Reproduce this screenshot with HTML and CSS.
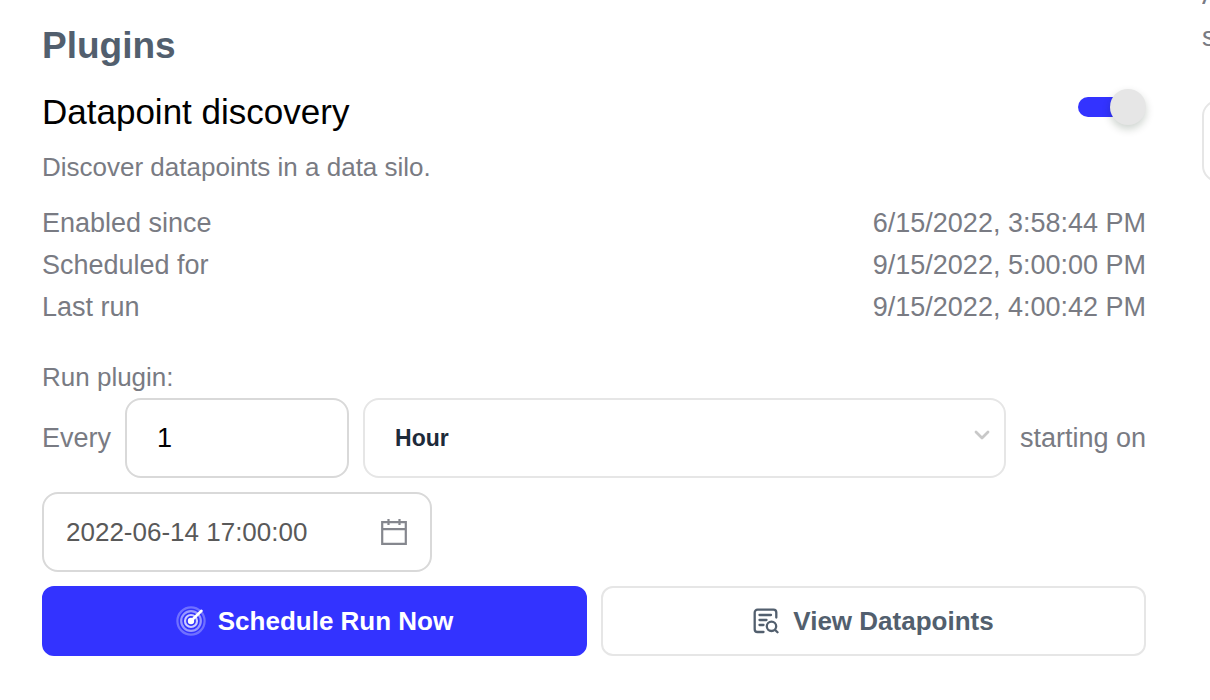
FILE: index.html
```html
<!DOCTYPE html>
<html lang="en">
<head>
<meta charset="utf-8">
<meta name="viewport" content="width=device-width, initial-scale=1">
<title>Plugins</title>
<link rel="stylesheet" href="styles.css">
</head>
<body>
<div class="page">
  <main class="panel">
    <h1 class="panel-title">Plugins</h1>
    <div class="plugin-head">
      <h2 class="plugin-name" id="plugin-name">Datapoint discovery</h2>
      <input class="switch" type="checkbox" role="switch" aria-labelledby="plugin-name" checked>
    </div>
    <p class="description">Discover datapoints in a data silo.</p>
    <dl class="facts">
      <div class="fact"><dt>Enabled since</dt><dd>6/15/2022, 3:58:44 PM</dd></div>
      <div class="fact"><dt>Scheduled for</dt><dd>9/15/2022, 5:00:00 PM</dd></div>
      <div class="fact"><dt>Last run</dt><dd>9/15/2022, 4:00:42 PM</dd></div>
    </dl>
    <form class="schedule">
      <p class="schedule-title">Run plugin:</p>
      <div class="controls">
        <label for="every">Every</label>
        <input class="field count" id="every" type="text" inputmode="numeric" value="1">
        <div class="select-wrap">
          <select class="field unit" aria-label="Interval unit">
            <option>Hour</option>
          </select>
          <svg class="chevron" viewBox="0 0 16 10" aria-hidden="true"><path d="M2 2l6 6 6-6" fill="none" stroke="currentColor" stroke-width="2.8" stroke-linecap="round" stroke-linejoin="round"/></svg>
        </div>
        <label for="start">starting on</label>
        <div class="date-wrap">
          <input class="field date" id="start" type="text" value="2022-06-14 17:00:00">
          <svg class="calendar" viewBox="0 0 28 28" aria-hidden="true"><path d="M2.2 4.2h23.600v21.600H2.200zM2.200 11.200h23.600M8.500 1v6M19.500 1v6" fill="none" stroke="currentColor" stroke-width="2.200"/></svg>
        </div>
      </div>
      <div class="actions">
        <button class="button primary" type="button">
          <svg class="icon target" viewBox="0 0 30 30" aria-hidden="true">
            <g fill="none" stroke="#fff" stroke-width="2.2">
              <circle cx="15" cy="15" r="13.6" opacity=".3"/>
              <circle cx="15" cy="15" r="9.8" opacity=".5"/>
              <circle cx="15" cy="15" r="6" opacity=".75"/>
            </g>
            <circle cx="15" cy="15" r="3.2" fill="#fff"/>
            <path d="M15 15L25.500 4.800" stroke="#fff" stroke-width="2.600" stroke-linecap="round"/>
          </svg>
          Schedule Run Now
        </button>
        <button class="button secondary" type="button">
          <svg class="icon list" viewBox="0 0 26 26" aria-hidden="true">
            <g fill="none" stroke="currentColor" stroke-width="2.300" stroke-linecap="round">
              <path d="M10.500 24H4.500A2.800 2.800 0 0 1 1.700 21.200V4.500A2.800 2.800 0 0 1 4.500 1.700H20.500A2.800 2.800 0 0 1 23.300 4.500V9.500M6.500 7H18M6.500 12H13.500M6.500 17H10.500"/>
              <circle cx="18.500" cy="18.300" r="4.700"/>
              <path d="M21.900 21.700L24.500 24.300"/>
            </g>
          </svg>
          View Datapoints
        </button>
      </div>
    </form>
  </main>
  <aside class="side">
    <p class="side-text">A<br>s</p>
    <div class="side-card"></div>
  </aside>
</div>
</body>
</html>
```
FILE: styles.css
```css
* { box-sizing: border-box; }

body {
  margin: 0;
  background: #fff;
  color: #797b83;
  font: 27px/42px "Liberation Sans", Arial, sans-serif;
}

h1, h2, p, dl, dd { margin: 0; }

.page {
  display: flex;
  gap: 56px;
  min-height: 100vh;
  overflow: hidden;
}

.panel {
  flex: 1;
  min-width: 0;
  padding: 20px 0 44px 42px;
}

.panel-title {
  color: #525f6e;
  font-size: 37px;
  font-weight: 700;
  line-height: 52px;
}

.plugin-head {
  display: flex;
  align-items: center;
  justify-content: space-between;
  margin-top: 12px;
}

.plugin-name {
  color: #000;
  font-size: 35px;
  font-weight: 400;
  line-height: 56px;
}

.switch {
  appearance: none;
  display: flex;
  align-items: center;
  justify-content: flex-end;
  width: 68px;
  height: 20px;
  margin: 0 0 10px;
  border-radius: 10px;
  background: linear-gradient(to right, #33f 48px, transparent 48px);
}

.switch::before {
  content: "";
  width: 36px;
  height: 36px;
  border-radius: 50%;
  background: #e6e6e6;
  box-shadow: 0 4px 8px rgba(0, 35, 11, 0.2);
}

.description {
  margin-top: 6px;
  font-size: 26px;
}

.facts { margin-top: 14px; }

.fact {
  display: flex;
  justify-content: space-between;
}

.schedule { margin-top: 28px; }

.schedule-title { font-size: 26px; }

.controls {
  display: flex;
  flex-wrap: wrap;
  align-items: center;
  gap: 14px;
}

.field {
  width: 100%;
  height: 80px;
  border: 2px solid #d9d9d9;
  border-radius: 16px;
  background: #fff;
  font: inherit;
}

.count {
  width: 224px;
  padding: 0 30px;
  color: #000;
}

.select-wrap {
  position: relative;
  flex: 1 1 400px;
}

.unit {
  display: block;
  appearance: none;
  padding: 0 60px 0 30px;
  border-color: #e6e6e6;
  color: #1e2a3a;
  font-size: 23px;
  font-weight: 700;
}

.chevron {
  position: absolute;
  top: 32px;
  right: 16px;
  width: 16px;
  height: 10px;
  color: #c8c8c8;
  pointer-events: none;
}

.date-wrap {
  position: relative;
  width: 390px;
}

.date {
  display: block;
  padding: 0 60px 0 22px;
  color: #595959;
  font-size: 26px;
}

.calendar {
  position: absolute;
  top: 26px;
  right: 24px;
  width: 28px;
  height: 28px;
  color: #85878e;
}

.actions {
  display: grid;
  grid-template-columns: 1fr 1fr;
  gap: 14px;
  margin-top: 14px;
}

.button {
  display: flex;
  align-items: center;
  justify-content: center;
  gap: 12px;
  height: 70px;
  border: 2px solid #e6e6e6;
  border-radius: 12px;
  background: #fff;
  color: #525f6e;
  font: inherit;
  font-size: 26px;
  font-weight: 700;
}

.primary {
  border-color: #33f;
  background: #33f;
  color: #fff;
}

.target {
  width: 30px;
  height: 30px;
}

.list {
  width: 26px;
  height: 26px;
  margin-right: 2px;
}

.side {
  width: 8px;
  padding-top: 16px;
  overflow: hidden;
}

.side-text {
  margin-top: -42px;
  white-space: nowrap;
}

.side-card {
  width: 400px;
  height: 82px;
  margin-top: 42px;
  border: 2px solid #e6e6e6;
  border-radius: 16px;
}
```
